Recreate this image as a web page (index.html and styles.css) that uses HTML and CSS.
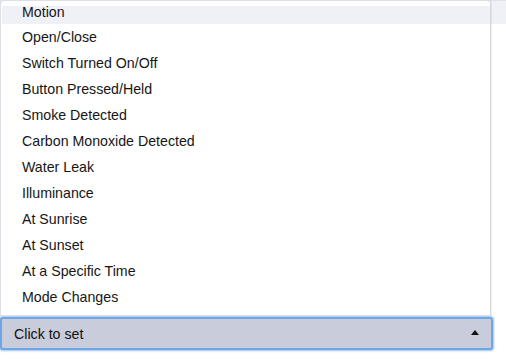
FILE: index.html
```html
<!DOCTYPE html>
<html>
<head>
    <meta charset="utf-8">
    <link rel="stylesheet" href="styles.css">
</head>
<body>
    <div class="topbar"><span class="topbar-mark"></span></div>
    <div class="page-space"></div>
    <div class="picker">
        <ul class="menu">
            <li class="menu-item menu-item-hover">Motion</li>
            <li class="menu-item">Open/Close</li>
            <li class="menu-item">Switch Turned On/Off</li>
            <li class="menu-item">Button Pressed/Held</li>
            <li class="menu-item">Smoke Detected</li>
            <li class="menu-item">Carbon Monoxide Detected</li>
            <li class="menu-item">Water Leak</li>
            <li class="menu-item">Illuminance</li>
            <li class="menu-item">At Sunrise</li>
            <li class="menu-item">At Sunset</li>
            <li class="menu-item">At a Specific Time</li>
            <li class="menu-item">Mode Changes</li>
        </ul>
        <div class="select">
            <span class="select-label">Click to set</span>
            <span class="select-caret"></span>
        </div>
    </div>
</body>
</html>
```

FILE: styles.css
```css
html, body {
    margin: 0;
    padding: 0;
}

body {
    width: 506px;
    height: 362px;
    overflow: hidden;
    background: #ffffff;
    font-family: "Liberation Sans", Arial, sans-serif;
    font-size: 14.2px;
    color: #161616;
    display: flex;
    flex-direction: column;
}

.topbar {
    height: 24px;
    background: #f0f1f6;
    border-top: 1px solid #dfe3ec;
    box-sizing: border-box;
    position: relative;
}

.topbar-mark {
    position: absolute;
    left: 0;
    top: 1px;
    width: 2px;
    height: 7px;
    background: #5b8fd8;
}

.page-space {
    flex: 1;
}

.picker {
    position: relative;
    width: 493px;
    margin-bottom: 12px;
}

.menu {
    position: absolute;
    left: 0;
    bottom: 100%;
    margin: 0 0 1px 0;
    width: 491px;
    box-sizing: border-box;
    padding: 5px 0;
    list-style: none;
    background: #ffffff;
    border: 1px solid #dcdfe6;
    border-right-color: #d4d6dc;
    border-radius: 4px 4px 0 0;
    box-shadow: 1px 0 1px rgba(0, 0, 0, 0.06);
}

.menu-item {
    height: 26px;
    line-height: 26px;
    padding-left: 21px;
    white-space: nowrap;
}

.menu-item-hover {
    height: 18px;
    line-height: 12px;
    margin-left: 1px;
    padding-left: 20px;
    background: #f0f1f6;
}

.select {
    height: 33px;
    box-sizing: border-box;
    border: 2px solid #6ea6e8;
    border-radius: 3px;
    box-shadow: 0 0 2px 1px #9cc4f0;
    background: #c9ccda;
    display: flex;
    align-items: center;
    justify-content: space-between;
    padding: 0 12px 0 12px;
    color: #111111;
}

.select-caret {
    width: 0;
    height: 0;
    border-left: 4px solid transparent;
    border-right: 4px solid transparent;
    border-bottom: 5px solid #111111;
    margin-top: -3px;
}
```
